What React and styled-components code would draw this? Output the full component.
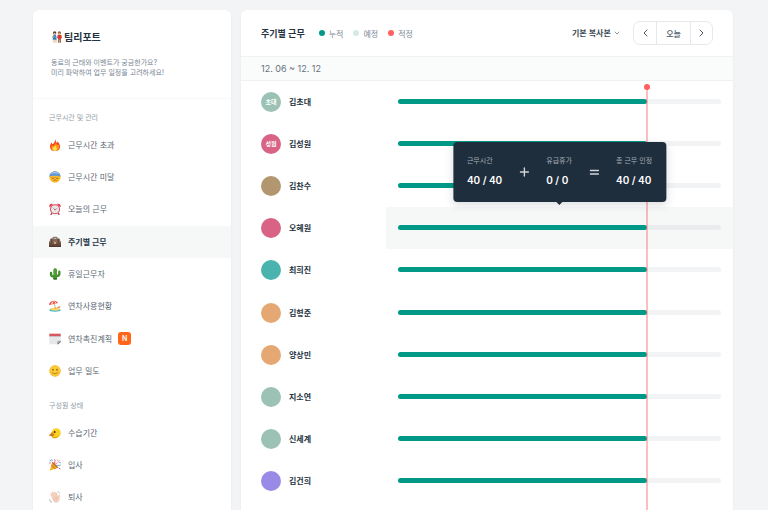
import React, { useState } from 'react'
import styled, { createGlobalStyle } from 'styled-components'

const GlobalStyle = createGlobalStyle`
  * {
    box-sizing: border-box;
  }
  body {
    margin: 0;
    background: #f2f4f6;
    font-family: Inter, "Noto Sans CJK KR", sans-serif;
    color: #243342;
  }
  button, select {
    font-family: inherit;
    color: inherit;
  }
  ul {
    list-style: none;
    margin: 0;
    padding: 0;
  }
`

const Page = styled.div`
  display: flex;
  gap: 10px;
  height: 100vh;
  padding: 10px 35px 0 33px;
  overflow: hidden;
`
const Panel = styled.div`
  background: #fff;
  border-radius: 6px 6px 0 0;
  box-shadow: 0 1px 3px rgba(31, 46, 61, 0.05);
`
const Sidebar = styled(Panel).attrs({ as: 'aside' })`
  flex: 0 0 198px;
`
const SidebarHeader = styled.header`
  height: 89px;
  padding: 19px 18px 0;
  border-bottom: 1px solid #f7f8f9;
`
const Title = styled.h1`
  display: flex;
  align-items: center;
  gap: 1px;
  margin: 0 0 13px;
  font-size: 10px;
  line-height: 16px;
  font-weight: 700;
`
const Description = styled.p`
  margin: 0;
  font-size: 7px;
  line-height: 10px;
  color: #7b8794;
`
const Section = styled.section`
  padding-top: 8px;
`
const SectionTitle = styled.h2`
  margin: 0;
  padding-left: 16px;
  font-size: 7px;
  line-height: 22px;
  font-weight: 400;
  color: #929ba5;
`
const MenuItem = styled.li`
  &:nth-child(3n) {
    margin-bottom: 1px;
  }
`
const MenuLink = styled.a`
  display: flex;
  align-items: center;
  gap: 7px;
  height: 32px;
  padding: 0 0 1px 16px;
  font-size: 8px;
  text-decoration: none;
  font-weight: ${props => props.$active ? 700 : 400};
  color: ${props => props.$active ? '#243342' : '#5a6774'};
  background: ${props => props.$active ? '#f6f8f8' : 'transparent'};
`
const NewBadge = styled.span`
  width: 13px;
  height: 13px;
  margin-left: -1px;
  border-radius: 3px;
  background: #ff661a;
  color: #fff;
  font-size: 7px;
  line-height: 13px;
  font-weight: 600;
  text-align: center;
`
const Emoji = styled.svg`
  display: block;
  flex: none;
  width: 12px;
  height: 12px;
`

const Main = styled(Panel).attrs({ as: 'main' })`
  flex: 1;
  min-width: 0;
`
const Toolbar = styled.header`
  display: flex;
  align-items: center;
  height: 46px;
  padding: 0 20px;
`
const MainTitle = styled.h2`
  margin: 0 14px 0 0;
  font-size: 9px;
  font-weight: 600;
`
const Legend = styled.ul`
  display: flex;
  gap: 10px;
  margin-right: auto;
`
const LegendItem = styled.li`
  display: flex;
  align-items: center;
  gap: 4px;
  font-size: 8px;
  color: #7b8794;
`
const LegendDot = styled.i`
  width: 6px;
  height: 6px;
  border-radius: 50%;
  background: ${props => props.$color};
`
const SelectBox = styled.label`
  display: flex;
  align-items: center;
  margin-right: 13px;
`
const Select = styled.select`
  appearance: none;
  padding: 0 9px 0 0;
  margin-right: -6px;
  border: none;
  outline: none;
  background: none;
  font-size: 8px;
  font-weight: 600;
  color: #3c4956;
`
const Pager = styled.div`
  display: flex;
  height: 24px;
  border: 1px solid #e6e9eb;
  border-radius: 7px;
`
const PagerButton = styled.button`
  display: flex;
  align-items: center;
  justify-content: center;
  width: ${props => props.$wide ? '34px' : '22px'};
  padding: 0;
  border: none;
  background: none;
  font-size: 8px;
  font-weight: 500;
  color: #4c5966;
  cursor: pointer;
  & + & {
    border-left: 1px solid #e6e9eb;
  }
`
const DateBar = styled.div`
  height: 25px;
  padding: 0 20px;
  border: solid #eff1f2;
  border-width: 1px 0;
  background: #fafbfb;
  font-size: 9px;
  line-height: 23px;
  color: #66727e;
`
const Board = styled.div`
  position: relative;
`
const Row = styled.li`
  display: grid;
  grid-template-columns: 145px 1fr;
  height: 42px;
  &:nth-child(5n) {
    margin-bottom: 1px;
  }
`
const Person = styled.div`
  display: flex;
  align-items: center;
  gap: 8px;
  padding: 0 0 1px 20px;
  font-size: 8px;
  font-weight: 600;
`
const Avatar = styled.span`
  width: 20px;
  height: 20px;
  border-radius: 50%;
  background: ${props => props.$color};
  color: #fff;
  font-size: 6px;
  line-height: 20px;
  font-weight: 600;
  text-align: center;
`
const ChartCell = styled.div`
  position: relative;
  display: flex;
  align-items: center;
  padding: 0 12px 1px;
  background: ${props => props.$active ? '#f6f8f8' : 'transparent'};
`
const Track = styled.div`
  flex: 1;
  height: 5px;
  border-radius: 3px;
  background: ${props => props.$active ? '#ebecee' : '#f2f3f4'};
`
const Bar = styled.div`
  height: 5px;
  border-radius: 3px;
  background: #009987;
`
/* spans the same width as the tracks, so the today line can use a percentage */
const TodayLayer = styled.div`
  position: absolute;
  top: 3px;
  bottom: 0;
  left: 157px;
  right: 12px;
  pointer-events: none;
`
const TodayLine = styled.div`
  position: absolute;
  top: 0;
  bottom: -40px;
  width: 2px;
  margin-left: -1px;
  background: rgba(255, 97, 97, 0.42);
  &::before {
    content: '';
    position: absolute;
    top: 0;
    left: -2px;
    width: 6px;
    height: 6px;
    border-radius: 50%;
    background: #ff6161;
  }
`
const Tooltip = styled.div`
  position: absolute;
  z-index: 2;
  left: 50%;
  bottom: 47px;
  transform: translateX(-50%);
  display: flex;
  align-items: center;
  gap: 17px;
  height: 60px;
  padding: 0 14px;
  border-radius: 4px;
  background: #1f2e3d;
  box-shadow: 0 3px 8px rgba(31, 46, 61, 0.16);
  white-space: nowrap;
  &::after {
    content: '';
    position: absolute;
    left: 50%;
    bottom: -3px;
    margin-left: -3px;
    border: solid transparent;
    border-width: 3px 3px 0;
    border-top-color: #1f2e3d;
  }
`
const Stat = styled.div`
  display: flex;
  flex-direction: column;
  gap: 6px;
  padding-bottom: 2px;
`
const StatLabel = styled.span`
  font-size: 7px;
  line-height: 12px;
  color: #a3abb3;
`
const StatValue = styled.strong`
  font-size: 10px;
  line-height: 14px;
  font-weight: 600;
  color: #fff;
`

const icons = {
  couple: (
    <>
      <circle cx="11" cy="6" r="5" fill="#4a3a30" />
      <circle cx="11" cy="8" r="3" fill="#e8b48c" />
      <path d="M7 12h8l2 8H6z" fill="#2f8fd8" />
      <path d="M6 20h10l1 6H5z" fill="#2b6fb3" />
      <path d="M7 13l-3 8M15 26v9M9 26v9" stroke="#e0a880" strokeWidth="3" />
      <circle cx="25" cy="6" r="5" fill="#9b5a38" />
      <circle cx="25" cy="8" r="3" fill="#e8b48c" />
      <path d="M20 12h11l2 10h-3v2h-9v-2h-3z" fill="#e0342f" />
      <path d="M21 23h9v12h-4v-8h-1v8h-4z" fill="#9a7350" />
    </>
  ),
  fire: (
    <>
      <path d="M19 1c3 5 1 8 4 11 2-1 2-3 2-5 5 5 8 10 8 16 0 8-6 13-15 13S3 31 3 23c0-6 3-9 5-13 1 3 1 5 3 6 5-4 8-9 8-15z" fill="#f4451c" />
      <path d="M20 10c1 5 3 7 5 9 1-1 2-2 2-4 2 4 3 6 3 9 0 7-5 11-12 11S7 31 7 25c0-3 1-5 2-7 1 2 2 3 4 3 4-3 7-6 7-11z" fill="#ff9a16" />
      <path d="M19 20c1 4 5 5 5 9 0 4-2 6-6 6s-7-2-7-6 3-4 8-9z" fill="#ffe24b" />
    </>
  ),
  anxious: (
    <>
      <circle cx="18" cy="18" r="17" fill="#fcb92b" />
      <path d="M1 17C2 8 9 1 18 1s16 7 17 16c-6-4-28-4-34 0z" fill="#5a96dc" />
      <path d="M5 9C9 4 13 2 18 2s10 2 13 7c-8-3-18-3-26 0z" fill="#a3c6ee" />
      <path d="M8 20c2 3 6 3 8 0M20 20c2 3 6 3 8 0" stroke="#6b4413" strokeWidth="2" fill="none" />
      <path d="M13 29c3-3 7-3 10 0" stroke="#8a5615" strokeWidth="2" fill="none" />
    </>
  ),
  clock: (
    <>
      <path d="M1 11C0 5 5 1 12 3L3 13zM35 11c1-6-4-10-11-8l9 10z" fill="#e33d48" />
      <path d="M7 29l-4 6h5l3-3zM29 29l4 6h-5l-3-3z" fill="#a93742" />
      <circle cx="18" cy="19" r="15" fill="#d84350" />
      <circle cx="18" cy="19" r="12" fill="#e6e8ea" />
      <path d="M11 14l7 6 7-4" fill="none" stroke="#8a939b" strokeWidth="2" />
      <circle cx="18" cy="20" r="2" fill="#d84350" />
    </>
  ),
  briefcase: (
    <>
      <path d="M12 9V4h12v5" fill="none" stroke="#6f625b" strokeWidth="3" />
      <path d="M5 8h26l5 12v13H0V20z" fill="#6b4a3b" />
      <path d="M5 8h26l4 11c-8 4-26 4-34 0z" fill="#876a5a" />
      <path d="M0 29h36v4H0z" fill="#54382c" />
      <path d="M7 8h3v13H7zM26 8h3v13h-3z" fill="#553a2e" />
      <path d="M16 18h4v6h-4z" fill="#e0cdb8" />
    </>
  ),
  cactus: (
    <>
      <path d="M13 6c0-7 11-7 11 0v26H13z" fill="#4d9a32" />
      <path d="M6 15v4c0 5 4 7 11 7M31 11v6c0 5-3 7-10 7" fill="none" stroke="#438b2d" strokeWidth="7" strokeLinecap="round" />
      <path d="M17 5v25M21 7v22" stroke="#6cae4c" strokeWidth="1" />
      <path d="M12 30h13l-2 5h-9z" fill="#347026" />
    </>
  ),
  beach: (
    <>
      <ellipse cx="18" cy="30" rx="17" ry="5" fill="#31b7d8" />
      <path d="M4 29c2-8 23-9 29 0-8 4-20 4-29 0z" fill="#ffd25c" />
      <path d="M15 10l5 16" stroke="#b58a5a" strokeWidth="2" />
      <path d="M0 15C1 3 18-4 27 9z" fill="#ef453d" />
      <path d="M6 13C7 6 12 3 16 2c3 2 5 5 5 8z" fill="#fff4e6" />
      <path d="M11 12c0-5 2-8 5-10 1 3 2 6 1 9z" fill="#ef453d" />
      <path d="M21 25l11-7 2 5z" fill="#f27c4c" />
    </>
  ),
  calendar: (
    <>
      <path d="M1 3h34v21L25 34H1z" fill="#e5e7e9" />
      <path d="M1 2h34v8H1z" fill="#d95860" />
      <path d="M1 10h34v2H1z" fill="#bfc2c6" />
      <path d="M35 23L24 34l2-10z" fill="#9ba0a7" />
      <path d="M24 34l11-11v4l-7 7z" fill="#646b73" />
    </>
  ),
  smile: (
    <>
      <circle cx="18" cy="18" r="17" fill="#f6a623" />
      <circle cx="18" cy="17" r="16" fill="#fccb34" />
      <ellipse cx="12" cy="14" rx="2" ry="3" fill="#704813" />
      <ellipse cx="24" cy="14" rx="2" ry="3" fill="#704813" />
      <path d="M9 22c4 6 14 6 18 0" fill="none" stroke="#8d5c16" strokeWidth="2" strokeLinecap="round" />
    </>
  ),
  chick: (
    <>
      <path d="M9 12C13 2 28 1 33 10c5 9 1 19-8 21-8 2-18-1-18-8z" fill="#fbd020" />
      <path d="M7 27c7 4 15 4 24-1-5 6-8 8-14 8-5 0-9-2-10-7z" fill="#e0a010" />
      <path d="M9 15L0 25l12 3 5-6z" fill="#e08a22" />
      <path d="M1 25l13-1" stroke="#9c5314" strokeWidth="2" />
      <circle cx="17" cy="15" r="3" fill="#40301d" />
    </>
  ),
  party: (
    <>
      <path d="M10 9l17 17L2 35z" fill="#f6b82b" />
      <path d="M8 15l13 14-5 2-10-10z" fill="#d98b2b" />
      <ellipse cx="18" cy="18" rx="3" ry="12" transform="rotate(-45 18 18)" fill="#c07a2a" />
      <path d="M18 15C15 9 20 7 17 1" fill="none" stroke="#e65272" strokeWidth="3" />
      <path d="M20 17c5-9 8-5 12-13" fill="none" stroke="#f59ab0" strokeWidth="3" />
      <path d="M22 21c5-4 8 0 13-3" fill="none" stroke="#5399e0" strokeWidth="3" />
      <path d="M2 3l5 4M8 1l2 4" stroke="#5399e0" strokeWidth="3" />
      <path d="M25 2l2 3M29 27l5 3" stroke="#e65272" strokeWidth="3" />
      <circle cx="3" cy="12" r="2" fill="#e65272" />
      <circle cx="33" cy="11" r="2" fill="#5399e0" />
    </>
  ),
  wave: (
    <>
      <path d="M10 17L6 9M14 14L10 5M19 13L16 4M24 15L22 7" stroke="#f3cfbb" strokeWidth="5" strokeLinecap="round" />
      <path d="M8 16l16-5 3 6c1-5 5-8 6-4 1 3-1 5-1 10 0 7-4 11-10 12-8 0-11-6-14-19z" fill="#f3cfbb" />
      <path d="M12 20l6 9M17 17l6 8M27 17c-5 1-6 5-5 8" fill="none" stroke="#d7a58d" strokeWidth="1" />
      <path d="M1 24c0 5 3 8 8 9M3 29c1 3 2 4 5 5M25 2c4 0 6 2 7 6" fill="none" stroke="#a6adb4" strokeWidth="2" />
    </>
  ),
}

const workMenu = [
  { icon: 'fire', label: '근무시간 초과' },
  { icon: 'anxious', label: '근무시간 미달' },
  { icon: 'clock', label: '오늘의 근무' },
  { icon: 'briefcase', label: '주기별 근무' },
  { icon: 'cactus', label: '휴일근무자' },
  { icon: 'beach', label: '연차사용현황' },
  { icon: 'calendar', label: '연차촉진계획', isNew: true },
  { icon: 'smile', label: '업무 밀도' },
]

const memberMenu = [
  { icon: 'chick', label: '수습기간' },
  { icon: 'party', label: '입사' },
  { icon: 'wave', label: '퇴사' },
]

const legend = [
  { label: '누적', color: '#009987' },
  { label: '예정', color: '#d6ebe7' },
  { label: '적정', color: '#ff6161' },
]

const members = [
  { name: '김초대', short: '초대', color: '#9cc2b5', progress: 77 },
  { name: '김성원', short: '성원', color: '#d96384', progress: 77 },
  { name: '김찬수', color: '#b29670', progress: 77 },
  { name: '오혜원', color: '#d96384', progress: 77 },
  { name: '최희진', color: '#4bb3ad', progress: 77 },
  { name: '김형준', color: '#e6a872', progress: 77 },
  { name: '양상민', color: '#e6a872', progress: 77 },
  { name: '지소연', color: '#9cc2b5', progress: 77 },
  { name: '신세계', color: '#9cc2b5', progress: 77 },
  { name: '김건희', color: '#9a8ae8', progress: 77 },
]

const today = 77

const EmojiIcon = ({ name }) => (
  <Emoji viewBox="0 0 36 36" aria-hidden="true">{icons[name]}</Emoji>
)

const Stroke = ({ d, color, width, height, weight = 1 }) => (
  <svg width={width} height={height} viewBox={`0 0 ${width} ${height}`} fill="none" stroke={color} strokeWidth={weight} strokeLinecap="round" strokeLinejoin="round" aria-hidden="true">
    <path d={d} />
  </svg>
)

const Menu = ({ title, items, selected, onSelect }) => (
  <Section>
    <SectionTitle>{title}</SectionTitle>
    <ul>
      {items.map(item => (
        <MenuItem key={item.label}>
          <MenuLink href="#" $active={item.label === selected} onClick={() => onSelect(item.label)}>
            <EmojiIcon name={item.icon} />
            {item.label}
            {item.isNew && <NewBadge>N</NewBadge>}
          </MenuLink>
        </MenuItem>
      ))}
    </ul>
  </Section>
)

const WorkTooltip = () => (
  <Tooltip role="tooltip">
    <Stat>
      <StatLabel>근무시간</StatLabel>
      <StatValue>40 / 40</StatValue>
    </Stat>
    <Stroke width={10} height={10} weight={1.4} color="#d2d5d8" d="M5 1v8M1 5h8" />
    <Stat>
      <StatLabel>유급휴가</StatLabel>
      <StatValue>0 / 0</StatValue>
    </Stat>
    <Stroke width={10} height={10} weight={1.4} color="#d2d5d8" d="M1 3.5h8M1 7h8" />
    <Stat>
      <StatLabel>총 근무 인정</StatLabel>
      <StatValue>40 / 40</StatValue>
    </Stat>
  </Tooltip>
)

const App = () => {
  const [selected, setSelected] = useState('주기별 근무')
  const [hovered, setHovered] = useState('오혜원')

  return (
    <Page>
      <GlobalStyle />
      <Sidebar>
        <SidebarHeader>
          <Title><EmojiIcon name="couple" />팀리포트</Title>
          <Description>
            동료의 근태와 이벤트가 궁금한가요?<br />
            미리 파악하여 업무 일정을 고려하세요!
          </Description>
        </SidebarHeader>
        <Menu title="근무시간 및 관리" items={workMenu} selected={selected} onSelect={setSelected} />
        <Menu title="구성원 상태" items={memberMenu} selected={selected} onSelect={setSelected} />
      </Sidebar>

      <Main>
        <Toolbar>
          <MainTitle>주기별 근무</MainTitle>
          <Legend>
            {legend.map(item => (
              <LegendItem key={item.label}><LegendDot $color={item.color} />{item.label}</LegendItem>
            ))}
          </Legend>
          <SelectBox>
            <Select aria-label="보기">
              <option>기본 복사본</option>
            </Select>
            <Stroke width={6} height={4} color="#8b96a0" d="M1 1l2 2 2-2" />
          </SelectBox>
          <Pager>
            <PagerButton aria-label="이전"><Stroke width={5} height={8} color="#4c5966" d="M4 1L1 4l3 3" /></PagerButton>
            <PagerButton $wide>오늘</PagerButton>
            <PagerButton aria-label="다음"><Stroke width={5} height={8} color="#4c5966" d="M1 1l3 3-3 3" /></PagerButton>
          </Pager>
        </Toolbar>
        <DateBar>12. 06 ~ 12. 12</DateBar>
        <Board>
          <ul>
            {members.map(member => (
              <Row key={member.name} onMouseEnter={() => setHovered(member.name)}>
                <Person>
                  <Avatar $color={member.color}>{member.short}</Avatar>
                  {member.name}
                </Person>
                <ChartCell $active={member.name === hovered}>
                  <Track $active={member.name === hovered}>
                    <Bar style={{ width: `${member.progress}%` }} />
                  </Track>
                  {member.name === hovered && <WorkTooltip />}
                </ChartCell>
              </Row>
            ))}
          </ul>
          <TodayLayer>
            <TodayLine style={{ left: `${today}%` }} />
          </TodayLayer>
        </Board>
      </Main>
    </Page>
  )
}

export default App
